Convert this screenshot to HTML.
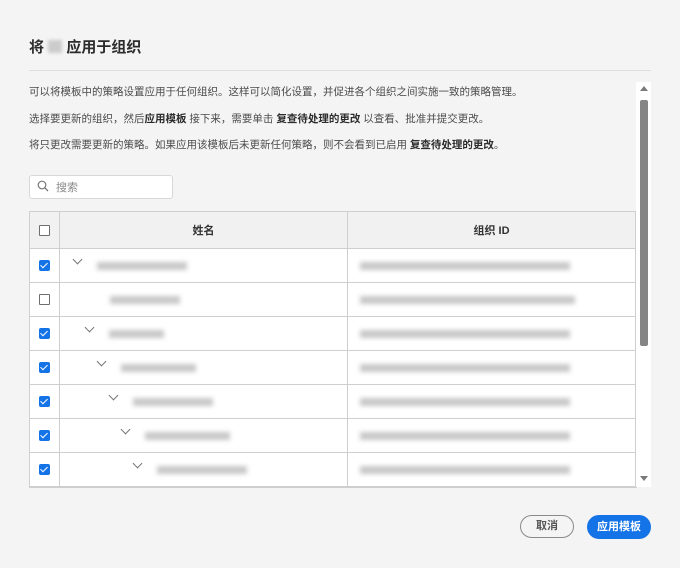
<html><head><style>
body{margin:0;width:680px;height:568px;background:#f4f4f4;font-family:"Liberation Sans","Noto Sans CJK SC",sans-serif;position:relative;overflow:hidden;color:#323232}
.a{position:absolute}
h1{position:absolute;left:29px;top:36px;margin:0;font-size:15px;font-weight:bold;color:#2c2c2c}
.p{position:absolute;left:29px;font-size:10.5px;color:#4b4b4b;white-space:nowrap}
.p b{color:#2c2c2c}
.wrap{position:absolute;left:29px;top:211px;width:608px;height:276px;overflow:hidden;border-bottom:1px solid #cfcfcf}
table{border-collapse:collapse;width:607px;font-size:11px}
td,th{border:1px solid #cfcfcf;padding:0}
tr{height:34px}
tr.h{height:37px}
th{background:#f1f1f1;font-weight:bold;color:#333}
td{background:#fff}
.cb{width:9px;height:9px;border:1px solid #6e6e6e;border-radius:1px;margin:auto;background:#fff}
.ck{width:11px;height:11px;border-radius:2px;background:#1473e6;margin:auto;position:relative}
.ck:after{content:"";position:absolute;left:3px;top:1px;width:3px;height:6px;border:solid #fff;border-width:0 1.6px 1.6px 0;transform:rotate(45deg)}
.bl{display:inline-block;height:8px;background:#c8c8c8;filter:blur(2.5px);vertical-align:middle}
.chev{display:inline-block;width:6px;height:6px;border:solid #777;border-width:0 1.3px 1.3px 0;transform:rotate(45deg);vertical-align:middle;position:relative;top:-6px}
</style></head><body>
<h1>将 <span style="display:inline-block;width:14px;height:13px;background:#ccc;filter:blur(1.5px);vertical-align:-1px"></span> 应用于组织</h1>
<div class="a" style="left:29px;top:70px;width:622px;height:1px;background:#dedede"></div>
<div class="p" style="top:84px">可以将模板中的策略设置应用于任何组织。这样可以简化设置，并促进各个组织之间实施一致的策略管理。</div>
<div class="p" style="top:111px">选择要更新的组织，然后<b>应用模板</b> 接下来，需要单击 <b>复查待处理的更改</b> 以查看、批准并提交更改。</div>
<div class="p" style="top:137px">将只更改需要更新的策略。如果应用该模板后未更新任何策略，则不会看到已启用 <b>复查待处理的更改</b>。</div>
<div class="a" style="left:29px;top:175px;width:142px;height:22px;background:#fff;border:1px solid #d8d8d8;border-radius:3px"></div>
<svg class="a" style="left:37px;top:180px" width="12" height="12" viewBox="0 0 12 12"><circle cx="5" cy="5" r="3.8" fill="none" stroke="#777" stroke-width="1.2"/><path d="M7.8 7.8L11 11" stroke="#777" stroke-width="1.3"/></svg>
<div class="a" style="left:56px;top:179px;font-size:11px;color:#8a8a8a">搜索</div>
<div class="wrap"><table>
<tr class="h"><th style="width:29px"><div class="cb"></div></th><th style="width:287px">姓名</th><th>组织 ID</th></tr>
<tr><td><div class="ck"></div></td><td style="padding-left:14px"><span class="chev"></span><span class="bl" style="width:90px;margin-left:16px"></span></td><td style="padding-left:12px"><span class="bl" style="width:210px"></span></td></tr>
<tr><td><div class="cb"></div></td><td style="padding-left:50px"><span class="bl" style="width:70px"></span></td><td style="padding-left:12px"><span class="bl" style="width:215px"></span></td></tr>
<tr><td><div class="ck"></div></td><td style="padding-left:26px"><span class="chev"></span><span class="bl" style="width:55px;margin-left:16px"></span></td><td style="padding-left:12px"><span class="bl" style="width:210px"></span></td></tr>
<tr><td><div class="ck"></div></td><td style="padding-left:38px"><span class="chev"></span><span class="bl" style="width:75px;margin-left:16px"></span></td><td style="padding-left:12px"><span class="bl" style="width:210px"></span></td></tr>
<tr><td><div class="ck"></div></td><td style="padding-left:50px"><span class="chev"></span><span class="bl" style="width:80px;margin-left:16px"></span></td><td style="padding-left:12px"><span class="bl" style="width:210px"></span></td></tr>
<tr><td><div class="ck"></div></td><td style="padding-left:62px"><span class="chev"></span><span class="bl" style="width:85px;margin-left:16px"></span></td><td style="padding-left:12px"><span class="bl" style="width:210px"></span></td></tr>
<tr><td><div class="ck"></div></td><td style="padding-left:74px"><span class="chev"></span><span class="bl" style="width:90px;margin-left:16px"></span></td><td style="padding-left:12px"><span class="bl" style="width:210px"></span></td></tr>
<tr><td><div class="ck"></div></td><td></td><td></td></tr>
</table></div>
<div class="a" style="left:636px;top:82px;width:15px;height:405px;background:#fff"></div>
<div class="a" style="left:640px;top:100px;width:8px;height:246px;background:#858585;border-radius:2px"></div>
<div class="a" style="left:640px;top:86px;width:0;height:0;border:4px solid transparent;border-bottom:5px solid #7a7a7a;border-top:0"></div>
<div class="a" style="left:640px;top:476px;width:0;height:0;border:4px solid transparent;border-top:5px solid #7a7a7a;border-bottom:0"></div>
<div class="a" style="left:520px;top:515px;width:52px;height:21px;border:1.5px solid #8a8a8a;border-radius:12px;text-align:center;line-height:21px;font-size:11px;font-weight:bold;color:#555">取消</div>
<div class="a" style="left:587px;top:515px;width:64px;height:24px;background:#1473e6;border-radius:12px;text-align:center;line-height:24px;font-size:11px;font-weight:bold;color:#fff">应用模板</div>
</body></html>
